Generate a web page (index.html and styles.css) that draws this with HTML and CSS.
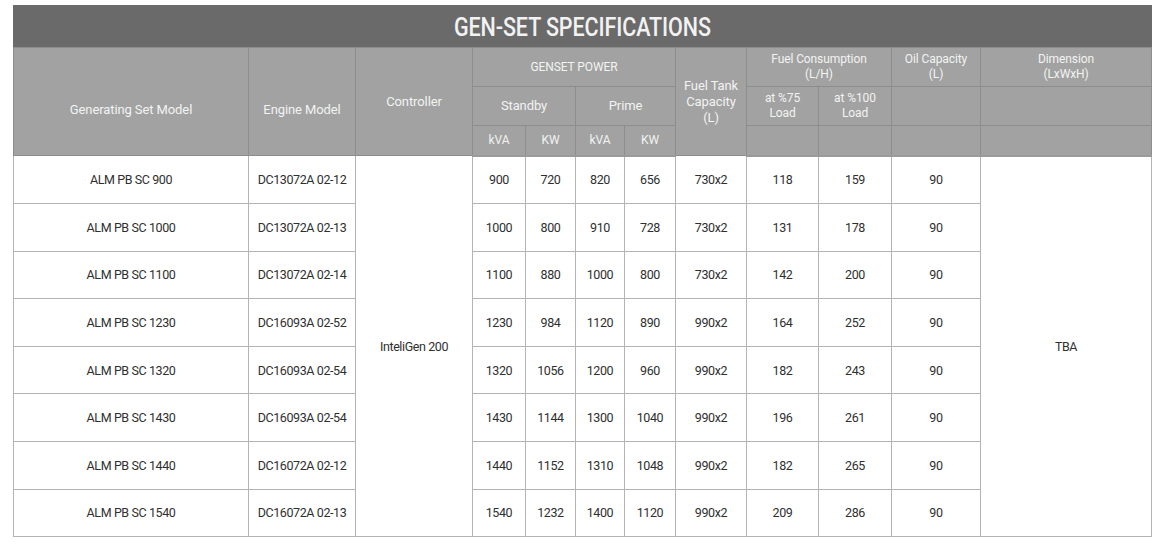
FILE: index.html
```html
<!DOCTYPE html>
<html lang="en">
<head>
<meta charset="utf-8">
<title>Gen-Set Specifications</title>
<link rel="stylesheet" href="styles.css">
</head>
<body>
<div class="wrap">
<table class="spec">
  <colgroup>
    <col class="c-model"><col class="c-engine"><col class="c-ctrl">
    <col class="c-kva1"><col class="c-kw1"><col class="c-kva2"><col class="c-kw2">
    <col class="c-tank"><col class="c-f75"><col class="c-f100"><col class="c-oil"><col class="c-dim">
  </colgroup>
  <thead>
    <tr class="title-row"><th colspan="12" class="title"><span class="title-text">GEN-SET SPECIFICATIONS</span></th></tr>
    <tr class="h1">
      <th rowspan="3" class="low">Generating Set Model</th>
      <th rowspan="3" class="low">Engine Model</th>
      <th rowspan="3">Controller</th>
      <th colspan="4" class="small">GENSET POWER</th>
      <th rowspan="3" class="tank">Fuel Tank<br>Capacity<br>(L)</th>
      <th colspan="2" class="small">Fuel Consumption<br>(L/H)</th>
      <th class="small">Oil Capacity<br>(L)</th>
      <th class="small">Dimension<br>(LxWxH)</th>
    </tr>
    <tr class="h2">
      <th colspan="2">Standby</th>
      <th colspan="2">Prime</th>
      <th class="small">at %75<br>Load</th>
      <th class="small">at %100<br>Load</th>
      <th></th>
      <th></th>
    </tr>
    <tr class="h3">
      <th class="small">kVA</th><th class="small">KW</th><th class="small">kVA</th><th class="small">KW</th>
      <th></th><th></th><th></th><th></th>
    </tr>
  </thead>
  <tbody>
    <tr><td>ALM PB SC 900</td><td>DC13072A 02-12</td><td rowspan="8">InteliGen 200</td><td>900</td><td>720</td><td>820</td><td>656</td><td>730x2</td><td>118</td><td>159</td><td>90</td><td rowspan="8">TBA</td></tr>
    <tr><td>ALM PB SC 1000</td><td>DC13072A 02-13</td><td>1000</td><td>800</td><td>910</td><td>728</td><td>730x2</td><td>131</td><td>178</td><td>90</td></tr>
    <tr><td>ALM PB SC 1100</td><td>DC13072A 02-14</td><td>1100</td><td>880</td><td>1000</td><td>800</td><td>730x2</td><td>142</td><td>200</td><td>90</td></tr>
    <tr><td>ALM PB SC 1230</td><td>DC16093A 02-52</td><td>1230</td><td>984</td><td>1120</td><td>890</td><td>990x2</td><td>164</td><td>252</td><td>90</td></tr>
    <tr><td>ALM PB SC 1320</td><td>DC16093A 02-54</td><td>1320</td><td>1056</td><td>1200</td><td>960</td><td>990x2</td><td>182</td><td>243</td><td>90</td></tr>
    <tr><td>ALM PB SC 1430</td><td>DC16093A 02-54</td><td>1430</td><td>1144</td><td>1300</td><td>1040</td><td>990x2</td><td>196</td><td>261</td><td>90</td></tr>
    <tr><td>ALM PB SC 1440</td><td>DC16072A 02-12</td><td>1440</td><td>1152</td><td>1310</td><td>1048</td><td>990x2</td><td>182</td><td>265</td><td>90</td></tr>
    <tr><td>ALM PB SC 1540</td><td>DC16072A 02-13</td><td>1540</td><td>1232</td><td>1400</td><td>1120</td><td>990x2</td><td>209</td><td>286</td><td>90</td></tr>
  </tbody>
</table>
</div>
</body>
</html>
```

FILE: styles.css
```css
html, body {
  margin: 0;
  padding: 0;
  background: #ffffff;
}

.wrap {
  padding: 5px 10px 0 13px;
}

.spec {
  width: 1138px;
  table-layout: fixed;
  border-collapse: collapse;
  font-family: "Roboto", "Liberation Sans", sans-serif;
  text-align: center;
  border: 1px solid #a9a9a9;
}

.c-model { width: 235px; }
.c-engine { width: 107px; }
.c-ctrl { width: 117px; }
.c-kva1 { width: 53px; }
.c-kw1 { width: 50px; }
.c-kva2 { width: 49px; }
.c-kw2 { width: 51px; }
.c-tank { width: 71px; }
.c-f75 { width: 72px; }
.c-f100 { width: 73px; }
.c-oil { width: 89px; }
.c-dim { width: 171px; }

.spec th {
  background: #a1a2a1;
  color: #f3f3f3;
  font-weight: 400;
  font-size: 13px;
  line-height: 16px;
  letter-spacing: -0.1px;
  border: 1px solid #8d8d8d;
  padding: 0;
  vertical-align: middle;
}

.spec th.title {
  background: #6a6a6a;
  color: #f2f2f2;
  font-size: 25px;
  font-weight: 500;
  height: 41px;
  border: 1px solid #6a6a6a;
  border-bottom: 1px solid #8d8d8d;
}

.title-text {
  display: inline-block;
  transform: scaleX(0.86);
  padding-top: 2px;
}

.spec th.small {
  font-size: 12px;
  line-height: 15px;
}

.spec th.low {
  padding-top: 16px;
}

.h1 { height: 39px; }
.h2 { height: 39px; }
.h3 { height: 30px; }

.spec thead tr.h3 th {
  border-bottom: 2px solid #9a9a9a;
}

.spec td {
  height: 46.6px;
  padding: 0;
  border: 1px solid #b3b3b3;
  color: #2f2f2f;
  font-size: 12.5px;
  font-weight: 400;
  letter-spacing: -0.4px;
  vertical-align: middle;
}
```
